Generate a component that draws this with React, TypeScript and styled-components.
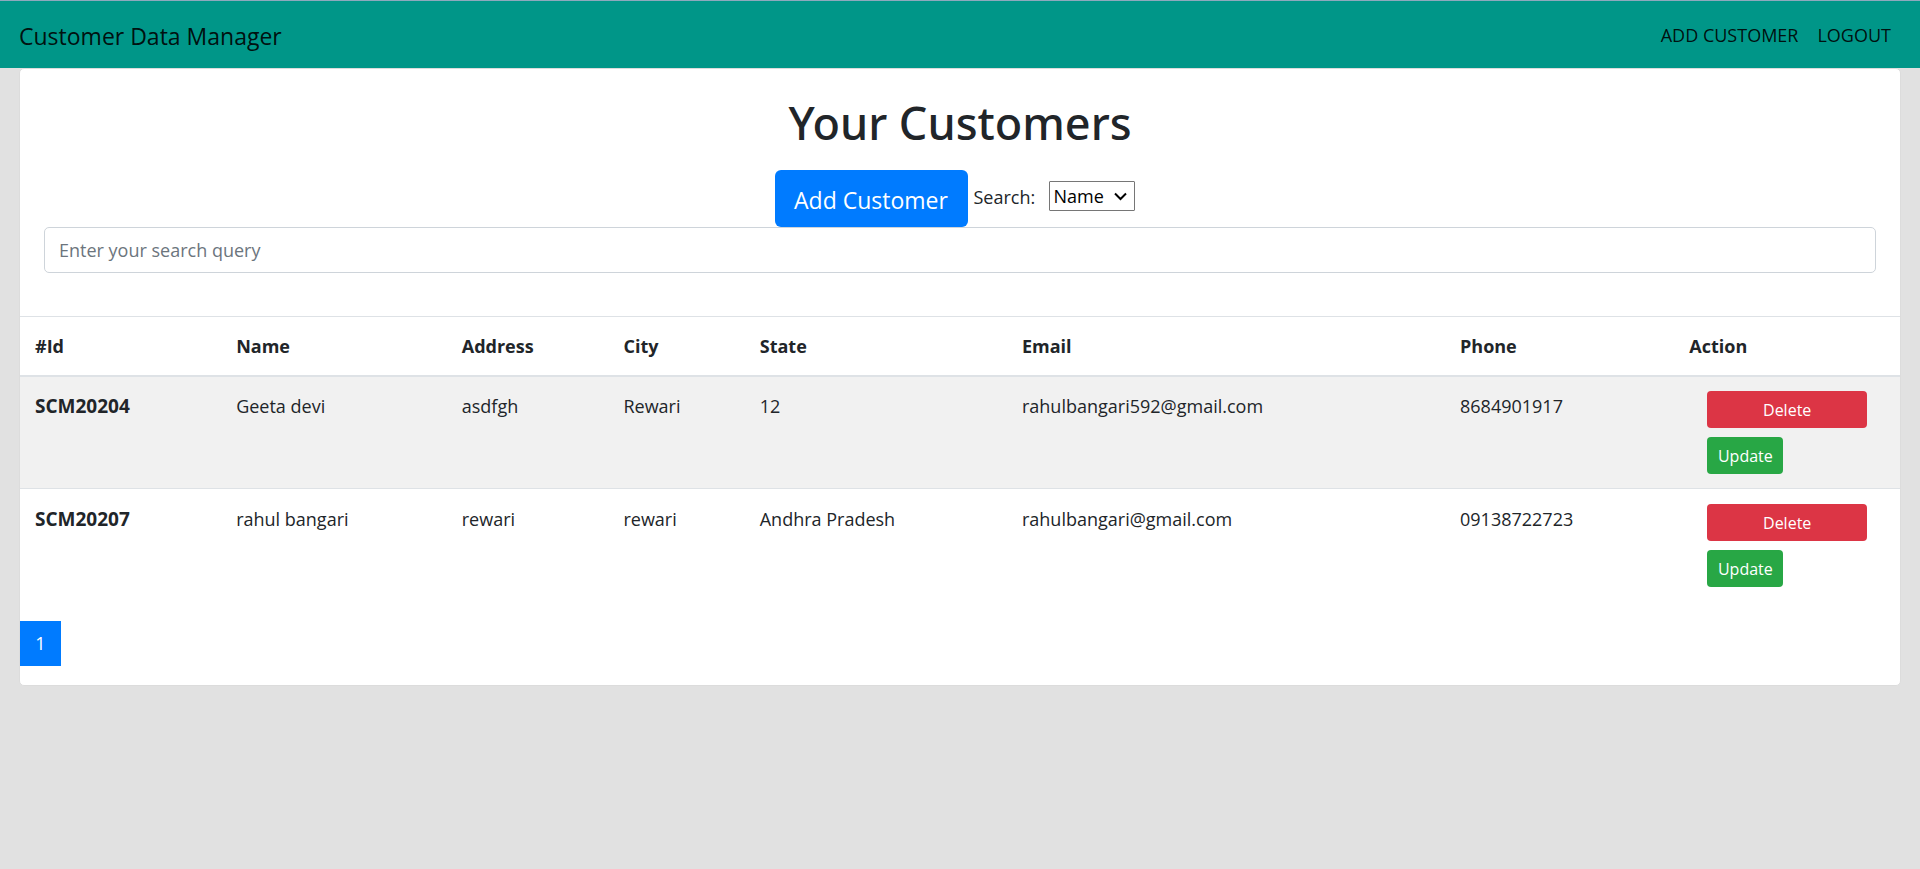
import React, { useState } from "react";
import styled, { createGlobalStyle } from "styled-components";

const GlobalStyle = createGlobalStyle`
  *, *::before, *::after { box-sizing: border-box; }
  body {
    margin: 0;
    background: #e1e1e1;
    color: #212529;
    font: 400 18px/30px "Segoe UI", "Open Sans", "Noto Sans", sans-serif;
  }
  button, input, select { font: inherit; }
`;

const Navbar = styled.nav`
  display: flex;
  align-items: center;
  justify-content: space-between;
  height: 68px;
  padding: 2px 19px 0;
  border-top: 1px solid #8ea9bd;
  background: #009688;
`;

const Brand = styled.a`
  color: rgba(0, 0, 0, 0.9);
  font-size: 23px;
  line-height: 34px;
  text-decoration: none;
`;

const NavLinks = styled.div`
  display: flex;
  gap: 19px;
  padding: 0 10px 2px;
`;

const NavLink = styled.a`
  color: rgba(0, 0, 0, 0.9);
  text-decoration: none;
  text-transform: uppercase;
`;

const Card = styled.main`
  margin: 0 19px;
  padding-bottom: 19px;
  border: 1px solid #dcdcdc;
  border-radius: 5px;
  background: #fff;
`;

const Header = styled.header`
  padding: 26px 24px 43px;
`;

const Title = styled.h1`
  margin: 0 0 19px;
  font-family: "Segoe UI", "Noto Sans", sans-serif;
  font-size: 45px;
  font-weight: 500;
  line-height: 56px;
  text-align: center;
`;

const Toolbar = styled.div`
  display: flex;
  align-items: center;
  justify-content: center;
  padding-right: 11px;
`;

const AddButton = styled.button`
  width: 193px;
  height: 57px;
  margin-right: 6px;
  padding: 2px 0 0;
  border: 0;
  border-radius: 6px;
  background: #007bff;
  color: #fff;
  font-size: 23px;
`;

const SearchLabel = styled.label`
  width: 75px;
  padding-bottom: 4px;
`;

const SelectBox = styled.div`
  position: relative;
  width: 86px;
  height: 30px;
  margin-bottom: 6px;
`;

const FieldSelect = styled.select`
  width: 100%;
  height: 100%;
  padding: 0 4px;
  border: 1px solid #767676;
  border-radius: 1px;
  appearance: none;
  background: #fff;
  color: #000;
  line-height: 28px;
`;

const Chevron = styled.svg`
  position: absolute;
  top: 11px;
  right: 8px;
  width: 13px;
  height: 9px;
  fill: none;
  stroke: #000;
  stroke-width: 2;
  pointer-events: none;
`;

const SearchInput = styled.input`
  display: block;
  width: 100%;
  height: 46px;
  padding: 4px 14px;
  border: 1px solid #ced4da;
  border-radius: 5px;
  background: #fff;
  color: #495057;

  &::placeholder {
    color: #6c757d;
    opacity: 1;
  }
`;

const Table = styled.table`
  width: 100%;
  margin-bottom: 20px;
  border-spacing: 0;
  table-layout: fixed;
  text-align: left;
`;

const Col = styled.col<{ $share?: number }>`
  width: ${({ $share }) => ($share ? `${$share}%` : "auto")};
`;

const HeadCell = styled.th`
  padding: 14px 15px;
  border-top: 1px solid #dee2e6;
  border-bottom: 2px solid #dee2e6;
  font-weight: 700;
`;

const IdCell = styled.th`
  padding: 14px 15px;
  font-size: 19px;
  font-weight: 700;
  vertical-align: top;
`;

const Cell = styled.td`
  padding: 14px 15px;
  vertical-align: top;
`;

const BodyRow = styled.tr`
  &:nth-child(odd) {
    background: #f1f1f1;
  }

  &:not(:first-child) > * {
    padding-top: 15px;
    border-top: 1px solid #dee2e6;
  }
`;

const Actions = styled.div`
  display: flex;
  flex-direction: column;
  align-items: flex-start;
  gap: 9px;
  padding: 0 18px;
`;

const ActionButton = styled.button<{ $tone: "danger" | "success" }>`
  width: ${({ $tone }) => ($tone === "danger" ? "100%" : "76px")};
  height: 37px;
  padding: 0;
  border: 0;
  border-radius: 4px;
  background: ${({ $tone }) => ($tone === "danger" ? "#dc3545" : "#28a745")};
  color: #fff;
  font-size: 16px;
`;

const Pagination = styled.nav`
  display: flex;
`;

const PageLink = styled.a`
  width: 41px;
  border: 1px solid #007bff;
  background: #007bff;
  color: #fff;
  line-height: 43px;
  text-align: center;
  text-decoration: none;
`;

const columns = [
  { title: "#Id", share: 10.7 },
  { title: "Name", share: 12 },
  { title: "Address", share: 8.6 },
  { title: "City", share: 7.25 },
  { title: "State", share: 13.95 },
  { title: "Email", share: 23.3 },
  { title: "Phone", share: 12.2 },
  { title: "Action" },
];

const customers = [
  {
    id: "SCM20204",
    name: "Geeta devi",
    address: "asdfgh",
    city: "Rewari",
    state: "12",
    email: "rahulbangari592@gmail.com",
    phone: "8684901917",
  },
  {
    id: "SCM20207",
    name: "rahul bangari",
    address: "rewari",
    city: "rewari",
    state: "Andhra Pradesh",
    email: "rahulbangari@gmail.com",
    phone: "09138722723",
  },
];

export default function App() {
  const [field, setField] = useState("name");
  const [query, setQuery] = useState("");

  return (
    <>
      <GlobalStyle />
      <Navbar>
        <Brand href="#">Customer Data Manager</Brand>
        <NavLinks>
          <NavLink href="#add">Add Customer</NavLink>
          <NavLink href="#logout">Logout</NavLink>
        </NavLinks>
      </Navbar>
      <Card>
        <Header>
          <Title>Your Customers</Title>
          <Toolbar>
            <AddButton type="button">Add Customer</AddButton>
            <SearchLabel htmlFor="field">Search:</SearchLabel>
            <SelectBox>
              <FieldSelect id="field" value={field} onChange={(e) => setField(e.target.value)}>
                <option value="name">Name</option>
                <option value="city">City</option>
                <option value="email">Email</option>
              </FieldSelect>
              <Chevron viewBox="0 0 13 9" aria-hidden="true">
                <path d="M1 1.5 6.5 7 12 1.5" />
              </Chevron>
            </SelectBox>
          </Toolbar>
          <SearchInput
            type="text"
            aria-label="Search query"
            placeholder="Enter your search query"
            value={query}
            onChange={(e) => setQuery(e.target.value)}
          />
        </Header>
        <Table>
          <colgroup>
            {columns.map((c) => (
              <Col key={c.title} $share={c.share} />
            ))}
          </colgroup>
          <thead>
            <tr>
              {columns.map((c) => (
                <HeadCell key={c.title} scope="col">
                  {c.title}
                </HeadCell>
              ))}
            </tr>
          </thead>
          <tbody>
            {customers.map((c) => (
              <BodyRow key={c.id}>
                <IdCell scope="row">{c.id}</IdCell>
                <Cell>{c.name}</Cell>
                <Cell>{c.address}</Cell>
                <Cell>{c.city}</Cell>
                <Cell>{c.state}</Cell>
                <Cell>{c.email}</Cell>
                <Cell>{c.phone}</Cell>
                <Cell>
                  <Actions>
                    <ActionButton type="button" $tone="danger">
                      Delete
                    </ActionButton>
                    <ActionButton type="button" $tone="success">
                      Update
                    </ActionButton>
                  </Actions>
                </Cell>
              </BodyRow>
            ))}
          </tbody>
        </Table>
        <Pagination aria-label="Pages">
          <PageLink href="#page-1" aria-current="page">
            1
          </PageLink>
        </Pagination>
      </Card>
    </>
  );
}
